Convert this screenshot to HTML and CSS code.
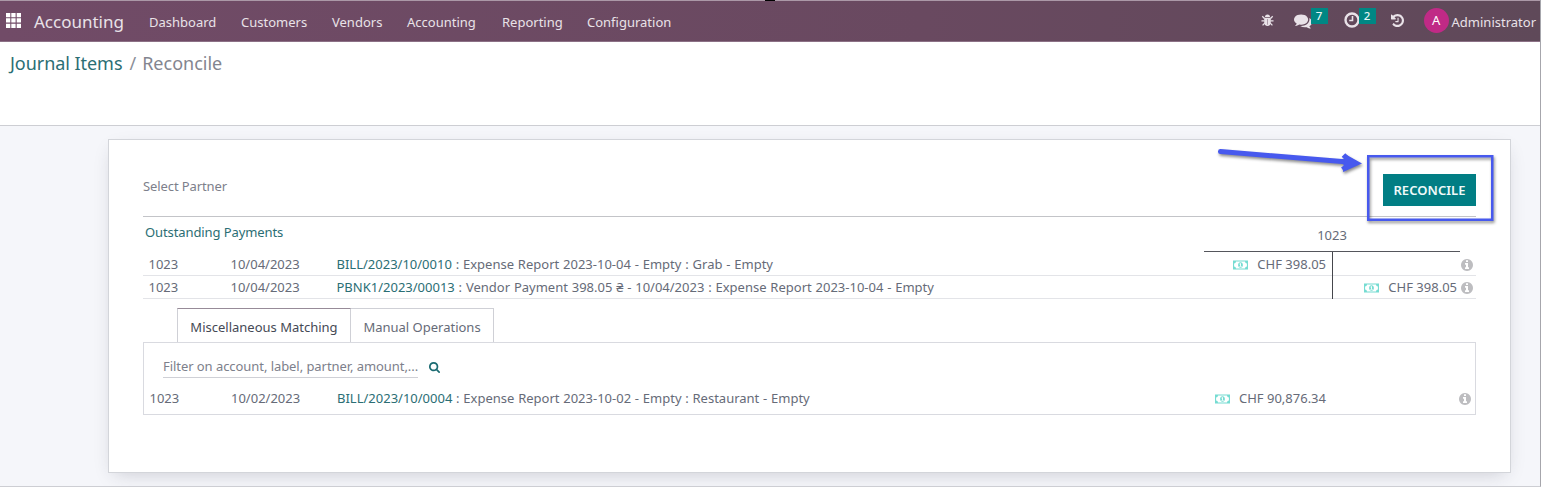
FILE: index.html
```
<!DOCTYPE html>
<html lang="en">
<head>
<meta charset="utf-8">
<title>Journal Items / Reconcile</title>
<link rel="stylesheet" href="styles.css">
</head>
<body>
<svg class="symbols" aria-hidden="true">
  <symbol id="i-info" viewBox="128 128 1536 1536"><path d="M1152 1376v-160q0-14-9-23t-23-9h-96v-512q0-14-9-23t-23-9h-320q-14 0-23 9t-9 23v160q0 14 9 23t23 9h96v320h-96q-14 0-23 9t-9 23v160q0 14 9 23t23 9h448q14 0 23-9t9-23zm-128-896v-160q0-14-9-23t-23-9h-192q-14 0-23 9t-9 23v160q0 14 9 23t23 9h192q14 0 23-9t9-23zm640 416q0 209-103 385.500t-279.500 279.500-385.500 103-385.500-103-279.500-279.500-103-385.500 103-385.500 279.500-279.500 385.500-103 385.500 103 279.500 279.500 103 385.500z"/></symbol>
  <symbol id="i-money" viewBox="0 0 15 10"><path fill-rule="evenodd" d="M0 .5h15v9H0zM3 1.6a2 2 0 0 1-1.9 1.9v3A2 2 0 0 1 3 8.400h9a2 2 0 0 1 1.900-1.900v-3A2 2 0 0 1 12 1.600zM7.500 2.200c1.500 0 2.400 1.300 2.400 2.800s-.9 2.800-2.400 2.800S5.100 6.500 5.100 5s.9-2.800 2.400-2.800zM6.500 3.700v.8h.6v1.400h-.7v.8h2.300v-.8H8V3.300h-.8z"/></symbol>
</svg>
<div class="app">
  <header class="navbar">
    <svg class="apps" viewBox="0 0 15 15"><path d="M0 0h4.300v4.300H0zM5.300 0h4.300v4.300H5.300zM10.700 0H15v4.300h-4.300zM0 5.300h4.300v4.300H0zM5.300 5.300h4.300v4.300H5.300zM10.700 5.300H15v4.300h-4.300zM0 10.700h4.300V15H0zM5.300 10.700h4.300V15H5.300zM10.700 10.700H15V15h-4.300z"/></svg>
    <span class="brand">Accounting</span>
    <nav class="menu">
      <span class="m1">Dashboard</span><span class="m2">Customers</span><span class="m3">Vendors</span><span class="m4">Accounting</span><span class="m5">Reporting</span><span class="m6">Configuration</span>
    </nav>
    <div class="systray">
      <svg class="bug" viewBox="0 0 14 14"><path d="M4.300 3.300a2.700 2.700 0 0 1 5.400 0zM3.400 4h7.200v4.800c0 2.300-1.500 4-3.600 4s-3.600-1.700-3.600-4z"/><path class="legs" d="M1.400 2.500l2.300 2.300M12.600 2.500l-2.300 2.300M.5 7.500h3M13.500 7.500h-3M1.700 12.300l2.300-2.500M12.300 12.300L10 9.800"/><path class="seam" d="M7 5.500v6"/></svg>
      <div class="tray chat"><svg viewBox="0 128 1792 1664"><path d="M1408 768q0 139-94 257t-256.500 186.500-353.500 68.500q-86 0-176-16-124 88-278 128-36 9-86 16h-3q-11 0-20.500-8t-11.500-21q-1-3-1-6.500t.5-6.500 2-6l2.500-5 3.500-5.500 4-5 4.500-5 4-4.500q5-6 23-25t26-29.500 22.500-29 25-38.500 20.500-44q-124-72-195-177t-71-224q0-139 94-257t256.500-186.500 353.500-68.500 353.500 68.500 256.500 186.500 94 257zm384 256q0 120-71 224.500t-195 176.500q10 24 20.500 44t25 38.500 22.500 29 26 29.500 23 25q1 1 4 4.500t4.500 5 4 5 3.500 5.500l2.500 5 2 6 .5 6.500-1 6.500q-3 14-13 22t-22 7q-50-7-86-16-154-40-278-128-90 16-176 16-271 0-472-132 58 4 88 4 161 0 309-45t264-129q125-92 192-212t67-254q0-77-23-152 129 71 204 178t75 230z"/></svg><span class="badge">7</span></div>
      <div class="tray clock"><svg viewBox="0 0 16 16"><circle cx="8" cy="8" r="6.500"/><path d="M8.500 4v4.500H5.200"/></svg><span class="badge">2</span></div>
      <svg class="history" viewBox="128 128 1536 1536"><path d="M1664 896q0 156-61 298t-164 245-245 164-298 61q-172 0-327-72.500t-264-204.500q-7-10-6.500-22.500t8.500-20.500l137-138q10-9 25-9 16 2 23 12 73 95 179 147t225 52q104 0 198.500-40.500t163.500-109.500 109.500-163.500 40.500-198.500-40.500-198.500-109.500-163.500-163.500-109.500-198.500-40.500q-98 0-188 35.500t-160 101.500l137 138q31 30 14 69-17 40-59 40h-448q-26 0-45-19t-19-45v-448q0-42 40-59 39-17 69 14l130 129q107-101 244.500-156.500t284.500-55.500q156 0 298 61t245 164 164 245 61 298zm-640-288v448q0 14-9 23t-23 9h-320q-14 0-23-9t-9-23v-64q0-14 9-23t23-9h224v-352q0-14 9-23t23-9h64q14 0 23 9t9 23z"/></svg>
      <span class="avatar">A</span>
      <span class="user">Administrator</span>
    </div>
  </header>
  <div class="control-panel"><span class="crumb">Journal Items</span><span class="slash">/</span><span class="current">Reconcile</span></div>
  <main class="content">
    <section class="sheet">
      <div class="statement-head"><span class="partner">Select Partner</span><button class="reconcile">RECONCILE</button></div>
      <div class="caption"><span class="title">Outstanding Payments</span><span class="account">1023</span></div>
      <div class="ledger">
        <div class="row first"><span class="acc">1023</span><span class="date">10/04/2023</span><span class="label"><a>BILL/2023/10/0010</a> : Expense Report 2023-10-04 - Empty : Grab - Empty</span><span class="debit"><svg class="money"><use href="#i-money"/></svg>CHF 398.05</span><span class="credit"></span><svg class="info"><use href="#i-info"/></svg></div>
        <div class="row"><span class="acc">1023</span><span class="date">10/04/2023</span><span class="label"><a>PBNK1/2023/00013</a> : Vendor Payment 398.05 ₴ - 10/04/2023 : Expense Report 2023-10-04 - Empty</span><span class="debit"></span><span class="credit"><svg class="money"><use href="#i-money"/></svg>CHF 398.05</span><svg class="info"><use href="#i-info"/></svg></div>
      </div>
      <div class="tabs"><span class="tab active">Miscellaneous Matching</span><span class="tab second">Manual Operations</span></div>
      <div class="pane">
        <div class="filter"><span class="input">Filter on account, label, partner, amount,...</span><svg class="search" viewBox="64 128 1664 1664"><path d="M1216 832q0-185-131.500-316.500t-316.500-131.500-316.500 131.500-131.500 316.500 131.500 316.500 316.500 131.500 316.500-131.500 131.500-316.500zm512 832q0 52-38 90t-90 38q-54 0-90-38l-343-342q-179 124-399 124-143 0-273.500-55.500t-225-150-150-225-55.500-273.500 55.500-273.500 150-225 225-150 273.500-55.500 273.500 55.500 225 150 150 225 55.500 273.500q0 220-124 399l343 343q37 37 37 90z"/></svg></div>
        <div class="row plain"><span class="acc">1023</span><span class="date">10/02/2023</span><span class="label"><a>BILL/2023/10/0004</a> : Expense Report 2023-10-02 - Empty : Restaurant - Empty</span><span class="debit"><svg class="money"><use href="#i-money"/></svg>CHF 90,876.34</span><span class="credit"></span><svg class="info"><use href="#i-info"/></svg></div>
      </div>
    </section>
  </main>
  <svg class="annotation" viewBox="0 0 300 90"><g><rect x="158.250" y="16.250" width="124" height="63.500"/><path class="shaft" d="M10.500 11.500L138 22"/><path class="head" d="M145.500 22.700l-12.500-.700M141 22.500L133.500 15M141 23.500L132.500 29.500"/><path class="tip" d="M135 14L152 23.500 133 32z"/></g></svg>
  <i class="handle top"></i><i class="handle side"></i>
</div>
</body>
</html>
```
FILE: styles.css
```
* { box-sizing: border-box; }
body { margin: 0; font: 13px/20px "Noto Sans", sans-serif; color: #666b78; background: #f5f6fa; }
svg { display: block; fill: currentColor; flex: none; }
.symbols { position: absolute; width: 0; height: 0; }
.app { position: relative; width: 1541px; height: 487px; display: flex; flex-direction: column; border-right: 1px solid #a6a6ac; border-bottom: 1px solid #cdced3; overflow: hidden; }
span { white-space: nowrap; }

.navbar { height: 42px; flex: none; display: flex; align-items: center; padding: 1px 4px 0 6px; color: #e9e2e8; background: linear-gradient(90deg, #714b67, #694960 60%, #5f4959); border-top: 1px solid #ab98a7; border-bottom: 1px solid #8c7186; }
.apps { width: 15px; height: 15px; color: #fff; margin-top: -2px; }
.brand { font-size: 17px; margin-left: 13px; width: 115px; }
.menu { display: flex; }
.m1 { width: 92px; }
.m2 { width: 91px; }
.m3 { width: 75px; }
.m4 { width: 95px; }
.m5 { width: 85px; }
.systray { display: flex; align-items: center; margin-left: auto; }
.bug { width: 13px; height: 13px; margin-right: 20px; margin-top: -2px; }
.bug .legs { stroke: currentColor; stroke-width: 1.4; fill: none; }
.bug .seam { stroke: #a895a3; stroke-width: 1; }
.tray { display: flex; align-items: center; height: 30px; }
.chat { width: 50px; }
.chat svg { width: 18px; height: 17px; margin-top: -1px; }
.clock { width: 47px; }
.clock svg { width: 16px; height: 16px; margin-top: -3px; fill: none; stroke: currentColor; stroke-width: 2.400; }
.clock path { stroke-width: 1.600; }
.badge { width: 17px; height: 16px; background: #008784; color: #e6f5f5; font-size: 11.500px; font-weight: 500; line-height: 15px; text-align: center; margin-top: -12px; margin-left: -1px; }
.history { width: 13px; height: 13px; margin-right: 20px; margin-top: -2px; }
.avatar { width: 25px; height: 25px; border-radius: 50%; background: #c02a86; color: #fff; text-align: center; line-height: 25px; margin-right: 3px; margin-top: -2px; }

.control-panel { height: 84px; flex: none; background: #fff; border-bottom: 1px solid #cdced3; padding: 9px 10px; font-size: 18px; line-height: 24px; display: flex; }
.crumb { color: #2b6e74; letter-spacing: -.05px; }
.slash { color: #8b8f99; margin: 0 6px 0 7px; }
.current { color: #83858f; }

.content { padding: 13px 29px 13px 108px; flex: 1; }
.sheet { height: 334px; background: #fff; border: 1px solid #d3d5da; box-shadow: 0 6px 18px -6px rgba(40,40,60,.22); padding: 34px 34px 0; }
.statement-head { height: 43px; display: flex; justify-content: space-between; border-bottom: 1px solid #c3c4c8; }
.partner { color: #7d808b; padding-top: 2px; letter-spacing: -.1px; }
.reconcile { width: 93px; height: 32px; border: 0; background: #017e84; color: #f0fafa; font: 600 13px/32px "Noto Sans", sans-serif; letter-spacing: .05px; padding: 0; }
.caption { height: 35px; display: flex; justify-content: space-between; padding: 5px 16px 0 2px; }
.title { color: #2b6e74; letter-spacing: -.1px; }
.account { width: 256px; height: 30px; line-height: 27px; text-align: center; border-bottom: 1px solid #55565c; }
.row { height: 23px; display: grid; grid-template-columns: 82px 106px 1fr 129px 127px 16px; border-bottom: 1px solid #e3e4e8; }
.row > span { line-height: 23px; }
.row.first { height: 24px; }
.row.first > span { line-height: 25px; }
.acc, .date, .label { padding-left: 5.500px; }
.label { word-spacing: .45px; }
.row a { color: #2b6e74; }
.debit, .credit { display: flex; justify-content: flex-end; align-items: center; }
.debit { border-right: 1px solid #45464c; padding-right: 6px; }
.credit { padding-right: 3px; }
.money { width: 15px; height: 10px; color: #75dcd2; margin-right: 9px; }
.info { width: 12px; height: 12px; color: #bdbdc0; align-self: center; margin-left: 1px; }
.tabs { display: flex; padding: 9px 34px 0; height: 43px; }
.tab { height: 34px; border: 1px solid #cfd0d6; border-bottom: 0; border-left: 0; line-height: 37px; text-align: center; width: 143px; }
.tab.active { width: 174px; color: #454955; border-left: 1px solid #cfd0d6; border-top-color: #978b98; }
.pane { height: 73px; border: 1px solid #d9dae0; padding: 12px 0 0; }
.filter { display: flex; padding-left: 19px; height: 31px; }
.input { width: 255px; height: 23px; line-height: 23px; color: #7d808b; border-bottom: 1px solid #cfd0d6; letter-spacing: -.06px; }
.search { width: 11px; height: 11px; color: #1b6b72; margin: 7px 0 0 11px; }
.row.plain { border-bottom: 0; grid-template-columns: 81.500px 106px 1fr 129px 127px 16px; height: 25px; }
.plain .debit { border-color: transparent; padding-right: 5px; }
.row.plain > span { line-height: 25px; }
.plain .info { margin-left: 0; }
.plain .label { word-spacing: .38px; }

.annotation { position: absolute; left: 1210px; top: 140px; width: 300px; height: 90px; filter: drop-shadow(1px 2px 1.500px rgba(0,0,0,.45)); }
.annotation rect { fill: none; stroke: #4759ee; stroke-width: 2.500; }
.shaft { stroke: #4759ee; stroke-width: 5; stroke-linecap: round; }
.head { fill: none; stroke: #4759ee; stroke-width: 5; }
.tip { fill: #4759ee; }
.handle { position: absolute; background: #000; }
.top { left: 765px; top: 0; width: 10px; height: 1px; }
.side { right: -1px; top: 243px; width: 1px; height: 10px; }
```
